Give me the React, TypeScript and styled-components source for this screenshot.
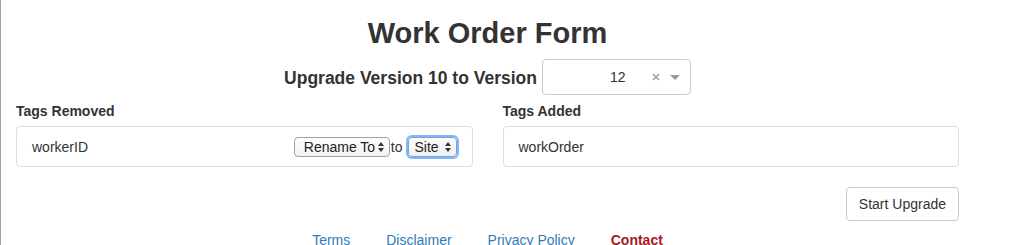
import React from "react";
import styled, {createGlobalStyle, css} from "styled-components";

const TEXT_COLOR = "#333";
const LINK_COLOR = "#337ab7";
const CONTACT_COLOR = "#a8171f";
const PANEL_BORDER = "#ddd";

const GlobalStyle = createGlobalStyle`
  html, body {
    margin: 0;
    padding: 0;
    background: #fff;
  }

  body {
    font-family: "Liberation Sans", Arial, Helvetica, sans-serif;
    font-size: 14px;
    color: ${TEXT_COLOR};
  }
`;

const Page = styled.div`
  width: 974px;
  min-height: 245px;
  box-sizing: border-box;
  border-left: 1px solid #a4a4a4;
  padding: 0 15px;
`;

const Title = styled.h1`
  margin: 0;
  padding-top: 17px;
  font-size: 29px;
  line-height: 32px;
  font-weight: 700;
  text-align: center;
  color: ${TEXT_COLOR};
`;

const VersionRow = styled.div`
  display: flex;
  justify-content: center;
  align-items: center;
  gap: 5px;
  margin-top: 10px;
`;

const VersionLabel = styled.span`
  font-size: 17.5px;
  font-weight: 700;
  line-height: 20px;
  padding-top: 2px;
`;

const VersionSelect = styled.div`
  width: 149px;
  height: 36px;
  box-sizing: border-box;
  border: 1px solid #ccc;
  border-radius: 4px;
  display: flex;
  align-items: center;
  background: #fff;
`;

const SelectValue = styled.span`
  flex: 1;
  padding-left: 67px;
  font-size: 14px;
  line-height: 20px;
  color: #333;
`;

const ClearIcon = styled.span`
  display: flex;
  width: 8px;
  margin-right: 10px;
`;

const CaretDown = styled.span`
  width: 0;
  height: 0;
  margin-right: 10px;
  border-style: solid;
  border-width: 5px 5px 2.5px;
  border-color: #999 transparent transparent;
  margin-top: 3px;
`;

const Columns = styled.div`
  display: grid;
  grid-template-columns: 1fr 1fr;
  column-gap: 30px;
  margin-top: 6px;
`;

const FieldLabel = styled.div`
  font-size: 14px;
  font-weight: 700;
  line-height: 20px;
  margin-bottom: 5px;
`;

const TagPanel = styled.div`
  height: 41px;
  box-sizing: border-box;
  border: 1px solid ${PANEL_BORDER};
  border-radius: 4px;
  padding: 0 15px;
  display: flex;
  align-items: center;
  font-size: 14px;
  line-height: 20px;
`;

const TagName = styled.span`
  flex: 1;
`;

const RenameControls = styled.div`
  display: flex;
  align-items: center;
`;

const MiniSelect = styled.span<{ $focused?: boolean; $width: number }>`
  display: inline-flex;
  align-items: center;
  justify-content: space-between;
  box-sizing: border-box;
  width: ${({$width}) => $width}px;
  height: 20px;
  padding: 0 5px 0 9px;
  border: 1px solid #a3a3a3;
  border-radius: 4px;
  background: linear-gradient(#fdfdfd, #f1f1f1);
  font-size: 14px;
  line-height: 18px;
  color: #222;

  ${({$focused}) => $focused && css`
    padding-left: 6px;
    border-color: #6fa6ea;
    box-shadow: 0 0 0 2px rgba(90, 156, 240, 0.75);
  `}
`;

const Joiner = styled.span`
  margin: 0 5px 0 1px;
  font-size: 14px;
`;

const Actions = styled.div`
  display: flex;
  justify-content: flex-end;
  margin-top: 20px;
`;

const Button = styled.button`
  font-family: inherit;
  font-size: 14px;
  line-height: 20px;
  padding: 6px 12px;
  color: ${TEXT_COLOR};
  background: #fff;
  border: 1px solid #ccc;
  border-radius: 4px;
  cursor: pointer;
`;

const Footer = styled.nav`
  display: flex;
  justify-content: center;
  gap: 36px;
  margin-top: 9px;
`;

const FooterLink = styled.a<{ $strong?: boolean }>`
  font-size: 14px;
  line-height: 20px;
  color: ${LINK_COLOR};
  text-decoration: none;

  ${({$strong}) => $strong && `
    color: ${CONTACT_COLOR};
    font-weight: 700;
  `}
`;

const UpDown = () => (
    <svg width="6" height="10" viewBox="0 0 6 10">
        <polygon points="0,4 3,0 6,4" fill="#333"/>
        <polygon points="0,6 3,10 6,6" fill="#333"/>
    </svg>
);

const Cross = () => (
    <svg width="8" height="8" viewBox="0 0 8 8">
        <path d="M1 1 L7 7 M7 1 L1 7" stroke="#999" strokeWidth="1.4"/>
    </svg>
);

export default function App() {
    return (
        <>
            <GlobalStyle/>
            <Page>
                <Title>Work Order Form</Title>

                <VersionRow>
                    <VersionLabel>Upgrade Version 10 to Version</VersionLabel>
                    <VersionSelect>
                        <SelectValue>12</SelectValue>
                        <ClearIcon><Cross/></ClearIcon>
                        <CaretDown/>
                    </VersionSelect>
                </VersionRow>

                <Columns>
                    <div>
                        <FieldLabel>Tags Removed</FieldLabel>
                        <TagPanel>
                            <TagName>workerID</TagName>
                            <RenameControls>
                                <MiniSelect $width={96}>Rename To <UpDown/></MiniSelect>
                                <Joiner>to</Joiner>
                                <MiniSelect $width={49} $focused>Site <UpDown/></MiniSelect>
                            </RenameControls>
                        </TagPanel>
                    </div>
                    <div>
                        <FieldLabel>Tags Added</FieldLabel>
                        <TagPanel>
                            <TagName>workOrder</TagName>
                        </TagPanel>
                    </div>
                </Columns>

                <Actions>
                    <Button>Start Upgrade</Button>
                </Actions>

                <Footer>
                    <FooterLink href="#">Terms</FooterLink>
                    <FooterLink href="#">Disclaimer</FooterLink>
                    <FooterLink href="#">Privacy Policy</FooterLink>
                    <FooterLink href="#" $strong>Contact</FooterLink>
                </Footer>
            </Page>
        </>
    );
}
